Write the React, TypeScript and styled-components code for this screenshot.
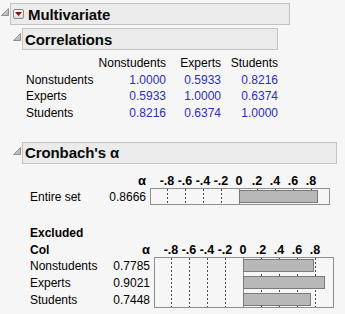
import React from 'react';
import styled, { createGlobalStyle } from 'styled-components';

const Global = createGlobalStyle`
  html, body { margin: 0; padding: 0; background: #f6f6f6; }
  body { font-family: "Liberation Sans", Arial, sans-serif; font-size: 12px; color: #000; }
`;

const Page = styled.div`
  width: 345px;
  height: 314px;
  box-sizing: border-box;
  padding-top: 3px;
  background: #f6f6f6;
  overflow: hidden;
`;

const Node = styled.section<{ $indent?: number; $top?: number }>`
  margin-left: ${p => p.$indent ?? 0}px;
  margin-top: ${p => p.$top ?? 0}px;
`;

const HeaderRow = styled.div`
  display: flex;
  align-items: flex-start;
`;

const TriSlot = styled.div`
  width: 10px;
  height: 22px;
  flex: none;
  display: flex;
  align-items: flex-start;
  padding-top: 5px;
  box-sizing: border-box;
`;

const HeaderBox = styled.div<{ $w: number }>`
  width: ${p => p.$w}px;
  height: 22px;
  box-sizing: border-box;
  border: 1px solid #c3c3c3;
  background: #ebebeb;
  display: flex;
  align-items: center;
  padding-left: 2px;
  gap: 4px;
`;

const Title = styled.span`
  font-weight: bold;
  font-size: 15px;
  color: #0a0a0a;
  letter-spacing: -0.1px;
`;

const MenuButton = styled.div`
  width: 11px;
  height: 10px;
  box-sizing: border-box;
  border: 1px solid #8a8a8a;
  border-radius: 2px;
  background: linear-gradient(#ffffff, #dcdcdc);
  display: flex;
  align-items: center;
  justify-content: center;
`;

const Body = styled.div<{ $indent: number }>`
  padding-left: ${p => p.$indent}px;
`;

const CorrGrid = styled.div`
  display: grid;
  grid-template-columns: 72px 68px 55px 57px;
  margin-top: 5px;
  margin-left: 14px;
  line-height: 16.7px;
  font-size: 12px;
`;

const ColHead = styled.div`
  text-align: right;
  color: #000;
`;

const RowLabel = styled.div`
  color: #000;
  white-space: nowrap;
`;

const CorrValue = styled.div`
  text-align: right;
  color: #2d2dbd;
`;

const AlphaGrid = styled.div<{ $labelW: number; $rows: number; $top: number }>`
  display: grid;
  grid-template-columns: ${p => p.$labelW}px 46px 180px;
  grid-template-rows: auto repeat(${p => p.$rows}, 17px);
  column-gap: 4px;
  margin-left: 18px;
  margin-top: ${p => p.$top}px;
  align-items: end;
`;

const HeadLabel = styled.div`
  font-weight: bold;
  line-height: 17px;
  margin-bottom: -2px;
  white-space: nowrap;
`;

const AlphaHead = styled.div`
  text-align: right;
  font-weight: bold;
  line-height: 14px;
  font-size: 13px;
`;

const Axis = styled.div`
  position: relative;
  height: 14px;
`;

const Tick = styled.span`
  position: absolute;
  top: 0;
  line-height: 14px;
  font-weight: bold;
  font-size: 12.5px;
  transform: translateX(-50%);
  white-space: nowrap;
`;

const DataLabel = styled.div`
  height: 17px;
  box-sizing: border-box;
  padding-top: 2px;
  line-height: 15px;
  white-space: nowrap;
  align-self: start;
`;

const DataValue = styled(DataLabel)`
  text-align: right;
`;

const ChartCell = styled.div<{ $rows: number }>`
  grid-column: 3;
  grid-row: 2 / span ${p => p.$rows};
  align-self: stretch;
  display: flex;
`;

const ZERO = 89;
const SCALE = 90;
const ROW = 17;
const ticks = [-0.8, -0.6, -0.4, -0.2, 0, 0.2, 0.4, 0.6, 0.8];
const tickText = (v: number) => (v === 0 ? '0' : (v < 0 ? '-' : '') + '.' + Math.round(Math.abs(v) * 10));

const Disclosure = () => (
  <svg width="8" height="8" viewBox="0 0 8 8" style={{ marginLeft: 1 }}>
    <defs>
      <linearGradient id="dg" x1="0" y1="0" x2="1" y2="1">
        <stop offset="0" stopColor="#e2e2e2" />
        <stop offset="1" stopColor="#b0b0b0" />
      </linearGradient>
    </defs>
    <polygon points="7.5,0.5 7.5,7.5 0.5,7.5" fill="url(#dg)" stroke="#8f8f8f" strokeWidth="1" strokeLinejoin="round" />
  </svg>
);

const RedTriangle = () => (
  <svg width="7" height="4" viewBox="0 0 7 4">
    <polygon points="0,0 7,0 3.5,4" fill="#8e0b0b" />
  </svg>
);

const AxisLabels = () => (
  <Axis>
    {ticks.map(v => (
      <Tick key={v} style={{ left: ZERO + v * SCALE }}>{tickText(v)}</Tick>
    ))}
  </Axis>
);

const BarChart = ({ values }: { values: number[] }) => {
  const h = values.length * ROW;
  return (
    <svg width="180" height={h} viewBox={`0 0 180 ${h}`}>
      {ticks.filter(v => v !== 0).map(v => (
        <line key={v} x1={ZERO + v * SCALE + 0.5} x2={ZERO + v * SCALE + 0.5} y1={1} y2={h - 1}
          stroke="#4a4a4a" strokeWidth="1" strokeDasharray="2 2" />
      ))}
      <line x1={ZERO + 0.5} x2={ZERO + 0.5} y1={0} y2={h} stroke="#8c8c8c" />
      {values.map((v, i) => (
        <rect key={i} x={ZERO + 0.5} y={i * ROW + 2.5} width={Math.round(v * SCALE)} height={12}
          fill="#b8b8b8" stroke="#7a7a7a" strokeWidth="1" />
      ))}
      <rect x={0.5} y={0.5} width={179} height={h - 1} fill="none" stroke="#8f8f8f" />
    </svg>
  );
};

const corrNames = ['Nonstudents', 'Experts', 'Students'];
const corr = [
  ['1.0000', '0.5933', '0.8216'],
  ['0.5933', '1.0000', '0.6374'],
  ['0.8216', '0.6374', '1.0000'],
];

const excluded = [
  { name: 'Nonstudents', alpha: 0.7785 },
  { name: 'Experts', alpha: 0.9021 },
  { name: 'Students', alpha: 0.7448 },
];

export default function App() {
  return (
    <Page>
      <Global />
      <Node>
        <HeaderRow>
          <TriSlot><Disclosure /></TriSlot>
          <HeaderBox $w={280}>
            <MenuButton><RedTriangle /></MenuButton>
            <Title>Multivariate</Title>
          </HeaderBox>
        </HeaderRow>
        <Body $indent={12}>
          <Node $top={3}>
            <HeaderRow>
              <TriSlot><Disclosure /></TriSlot>
              <HeaderBox $w={256}>
                <Title>Correlations</Title>
              </HeaderBox>
            </HeaderRow>
            <CorrGrid>
              <div />
              {corrNames.map(n => <ColHead key={n}>{n}</ColHead>)}
              {corrNames.map((n, i) => (
                <React.Fragment key={n}>
                  <RowLabel>{n}</RowLabel>
                  {corr[i].map((v, j) => <CorrValue key={j}>{v}</CorrValue>)}
                </React.Fragment>
              ))}
            </CorrGrid>
          </Node>
          <Node $top={20}>
            <HeaderRow>
              <TriSlot><Disclosure /></TriSlot>
              <HeaderBox $w={315}>
                <Title>Cronbach's α</Title>
              </HeaderBox>
            </HeaderRow>
            <AlphaGrid $labelW={66} $rows={1} $top={10}>
              <div />
              <AlphaHead>α</AlphaHead>
              <AxisLabels />
              <DataLabel>Entire set</DataLabel>
              <DataValue>0.8666</DataValue>
              <ChartCell $rows={1}><BarChart values={[0.8666]} /></ChartCell>
            </AlphaGrid>
            <AlphaGrid $labelW={70} $rows={3} $top={20}>
              <HeadLabel>Excluded<br />Col</HeadLabel>
              <AlphaHead>α</AlphaHead>
              <AxisLabels />
              {excluded.map((r, i) => (
                <React.Fragment key={r.name}>
                  <DataLabel style={{ gridRow: i + 2, gridColumn: 1 }}>{r.name}</DataLabel>
                  <DataValue style={{ gridRow: i + 2, gridColumn: 2 }}>{r.alpha.toFixed(4)}</DataValue>
                </React.Fragment>
              ))}
              <ChartCell $rows={3}><BarChart values={excluded.map(r => r.alpha)} /></ChartCell>
            </AlphaGrid>
          </Node>
        </Body>
      </Node>
    </Page>
  );
}
